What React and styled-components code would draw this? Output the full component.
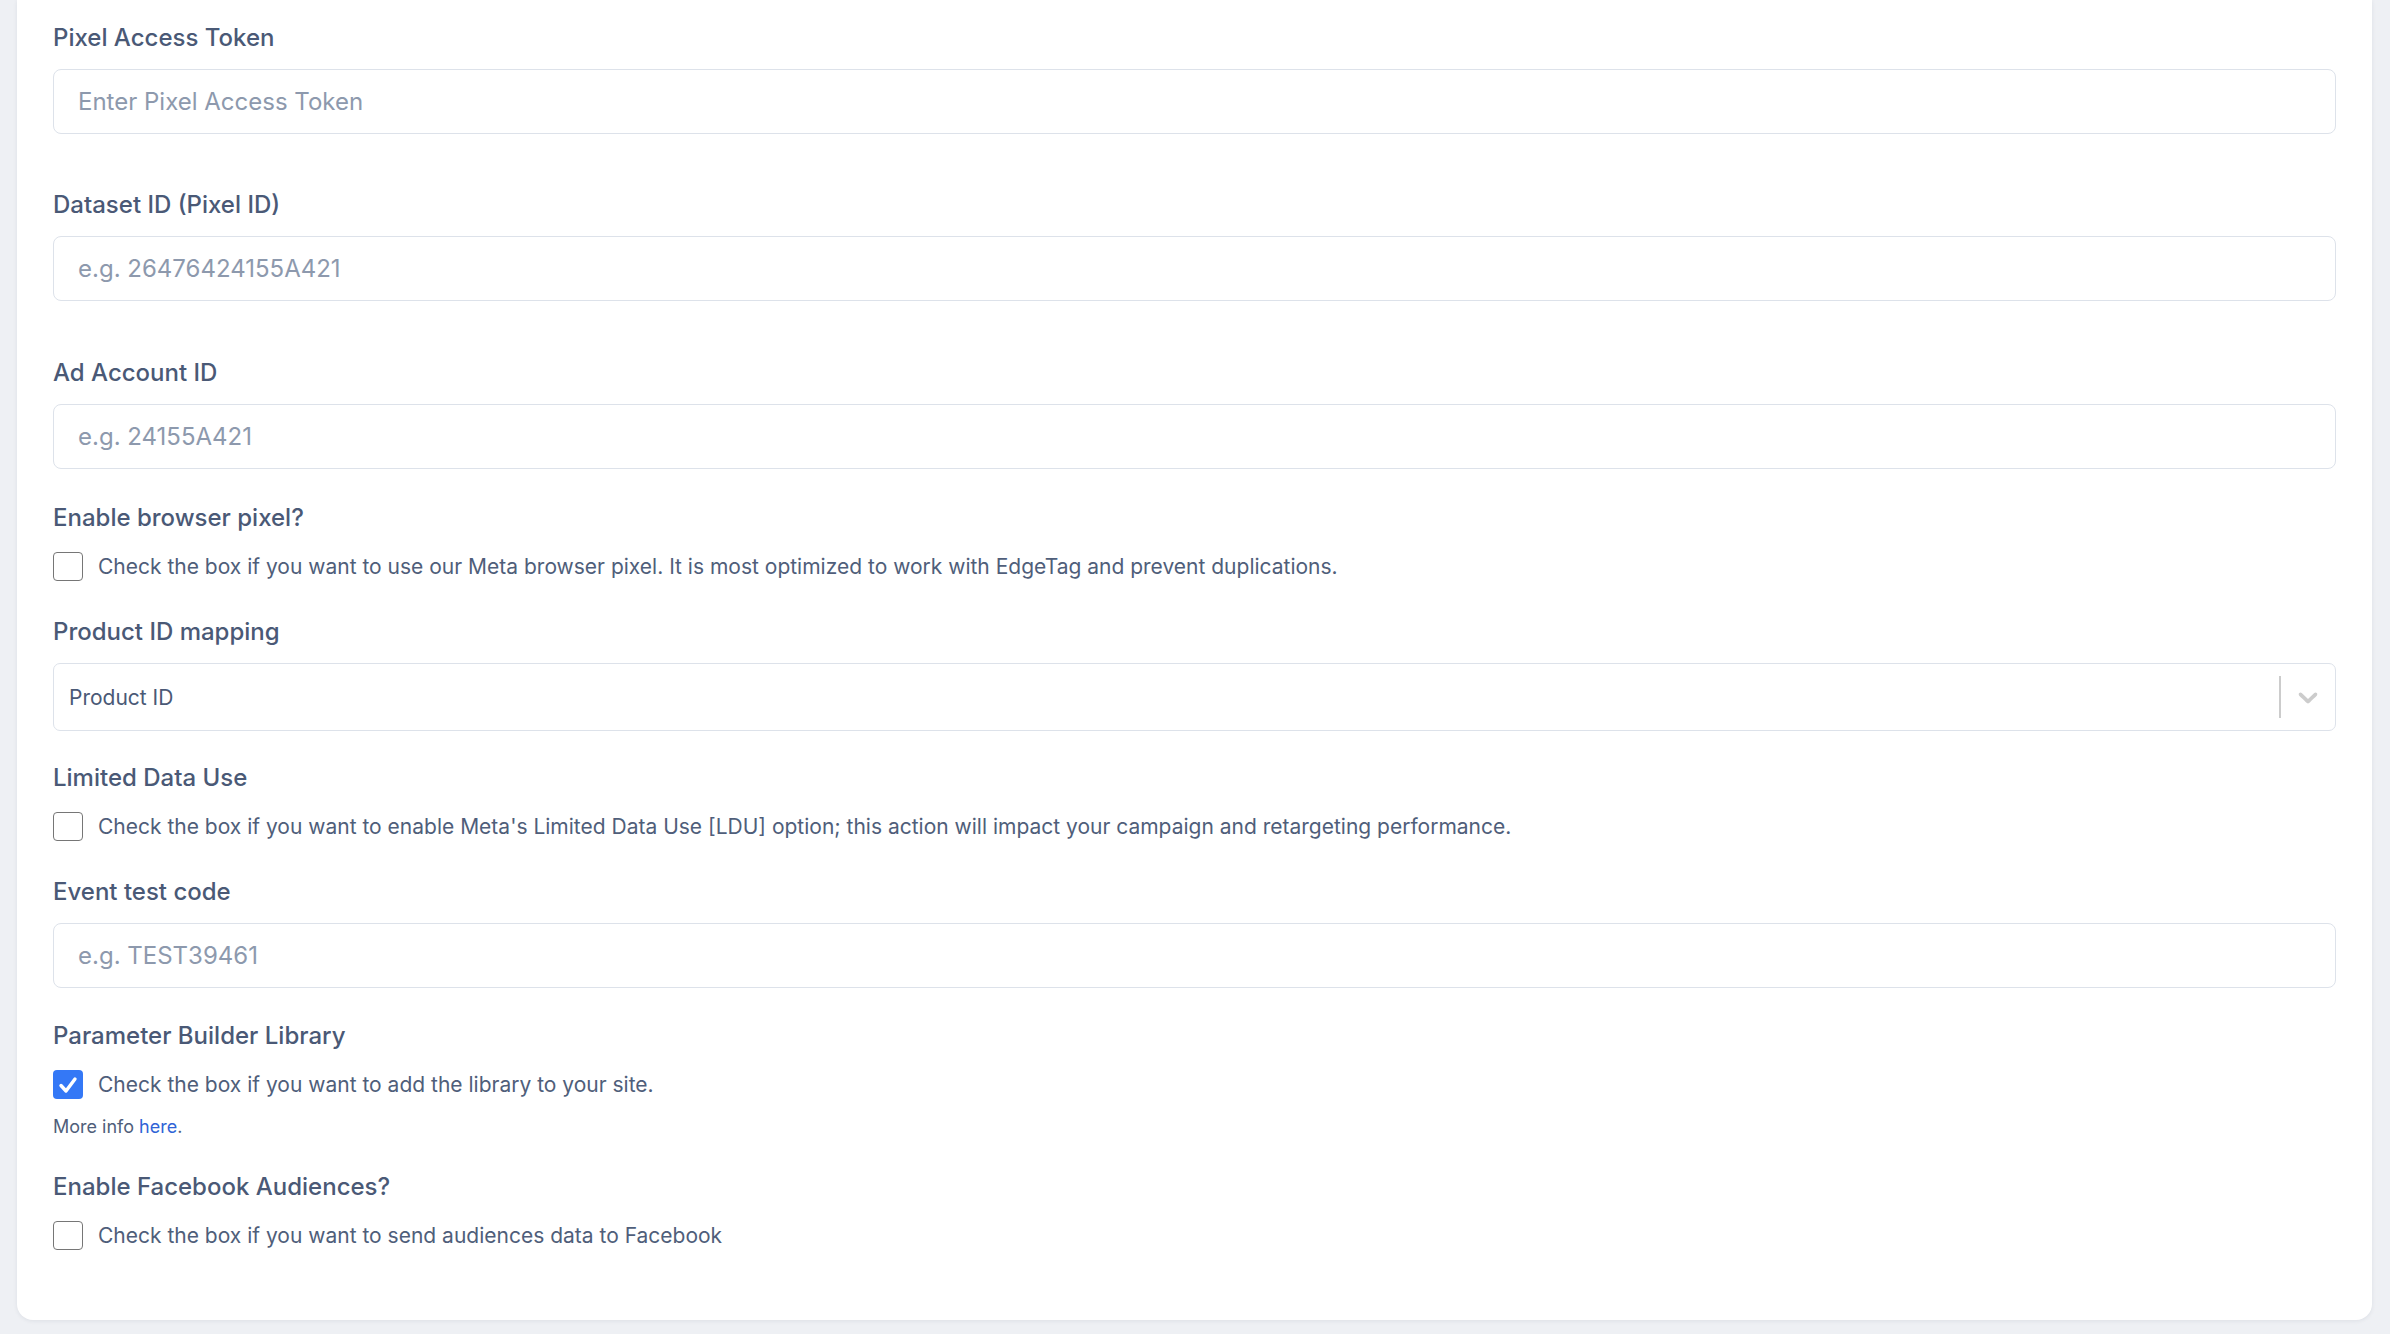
import React from 'react';
import styled, { createGlobalStyle } from 'styled-components';

const GlobalStyle = createGlobalStyle`
  html, body {
    margin: 0;
    padding: 0;
    background: #eef0f4;
    font-family: Inter, "Noto Sans", "Liberation Sans", sans-serif;
  }
  * {
    box-sizing: border-box;
  }
`;

const Page = styled.div`
  padding: 0 18px 16px 17px;
  min-height: 1334px;
`;

const Card = styled.div`
  background: #ffffff;
  border-radius: 0 0 16px 16px;
  box-shadow: 0 1px 4px rgba(30, 41, 59, 0.08);
  padding: 22px 36px 70px 36px;
  display: flex;
  flex-direction: column;
`;

const Field = styled.div`
  display: flex;
  flex-direction: column;
  margin-bottom: ${(p) => (p.$gap !== undefined ? p.$gap : 33)}px;
`;

const Label = styled.label`
  font-size: 24px;
  line-height: 32px;
  font-weight: 500;
  color: #4a5976;
  margin-bottom: ${(p) => (p.$check ? 18 : 15)}px;
`;

const TextInput = styled.input`
  height: 65px;
  width: 100%;
  border: 1px solid #dde2ea;
  border-radius: 8px;
  padding: 0 24px;
  font-family: inherit;
  font-size: 24px;
  color: #4a5976;
  background: #ffffff;
  outline: none;

  &::placeholder {
    color: #8d99ad;
  }
`;

const Select = styled.div`
  height: 68px;
  border: 1px solid #dde2ea;
  border-radius: 7px;
  display: flex;
  align-items: center;
  padding-left: 15px;
`;

const SelectValue = styled.span`
  flex: 1;
  font-size: 21px;
  color: #4a5976;
`;

const Separator = styled.span`
  width: 2px;
  height: 42px;
  background: #cccccc;
`;

const Indicator = styled.span`
  width: 54px;
  display: flex;
  align-items: center;
  justify-content: center;
  color: #cccccc;
`;

const CheckRow = styled.div`
  display: flex;
  align-items: center;
  gap: 15px;
  height: 29px;
`;

const Box = styled.span`
  width: 30px;
  height: 29px;
  border-radius: 4px;
  flex-shrink: 0;
  display: flex;
  align-items: center;
  justify-content: center;
  border: ${(p) => (p.$checked ? 'none' : '1.5px solid #767676')};
  background: ${(p) => (p.$checked ? '#3478f6' : '#ffffff')};
`;

const CheckText = styled.span`
  font-size: 21px;
  color: #4f5e7a;
  white-space: nowrap;
`;

const Hint = styled.div`
  margin-top: 16px;
  font-size: 18px;
  line-height: 24px;
  color: #4f5e7a;
`;

const Link = styled.a`
  color: #2f63d6;
  text-decoration: none;
`;

function Checkbox({ checked, children }) {
  return (
    <CheckRow>
      <Box $checked={checked}>
        {checked && (
          <svg width="22" height="22" viewBox="0 0 22 22">
            <polyline
              points="4,11.5 9,17 18,5"
              fill="none"
              stroke="#ffffff"
              strokeWidth="3.4"
              strokeLinecap="round"
              strokeLinejoin="round"
            />
          </svg>
        )}
      </Box>
      <CheckText>{children}</CheckText>
    </CheckRow>
  );
}

function Chevron() {
  return (
    <svg width="32" height="32" viewBox="0 0 20 20" fill="currentColor">
      <path d="M4.516 7.548c0.436-0.446 1.043-0.481 1.576 0l3.908 3.747 3.908-3.747c0.533-0.481 1.141-0.446 1.574 0 0.436 0.445 0.408 1.197 0 1.615-0.406 0.418-4.695 4.502-4.695 4.502-0.217 0.223-0.502 0.335-0.787 0.335s-0.57-0.112-0.789-0.335c0 0-4.287-4.084-4.695-4.502s-0.436-1.17 0-1.615z" />
    </svg>
  );
}

export default function App() {
  return (
    <Page>
      <GlobalStyle />
      <Card>
        <Field $gap={55}>
          <Label>Pixel Access Token</Label>
          <TextInput placeholder="Enter Pixel Access Token" />
        </Field>
        <Field $gap={56}>
          <Label>Dataset ID (Pixel ID)</Label>
          <TextInput placeholder="e.g. 26476424155A421" />
        </Field>
        <Field>
          <Label>Ad Account ID</Label>
          <TextInput placeholder="e.g. 24155A421" />
        </Field>
        <Field $gap={35}>
          <Label $check>Enable browser pixel?</Label>
          <Checkbox>
            Check the box if you want to use our Meta browser pixel. It is most optimized to work with EdgeTag and prevent duplications.
          </Checkbox>
        </Field>
        <Field $gap={31}>
          <Label>Product ID mapping</Label>
          <Select>
            <SelectValue>Product ID</SelectValue>
            <Separator />
            <Indicator>
              <Chevron />
            </Indicator>
          </Select>
        </Field>
        <Field $gap={35}>
          <Label $check>Limited Data Use</Label>
          <Checkbox>
            Check the box if you want to enable Meta's Limited Data Use [LDU] option; this action will impact your campaign and retargeting performance.
          </Checkbox>
        </Field>
        <Field $gap={32}>
          <Label>Event test code</Label>
          <TextInput placeholder="e.g. TEST39461" />
        </Field>
        <Field $gap={32}>
          <Label $check>Parameter Builder Library</Label>
          <Checkbox checked>Check the box if you want to add the library to your site.</Checkbox>
          <Hint>
            More info <Link href="#">here</Link>.
          </Hint>
        </Field>
        <Field $gap={0}>
          <Label $check>Enable Facebook Audiences?</Label>
          <Checkbox>Check the box if you want to send audiences data to Facebook</Checkbox>
        </Field>
      </Card>
    </Page>
  );
}
